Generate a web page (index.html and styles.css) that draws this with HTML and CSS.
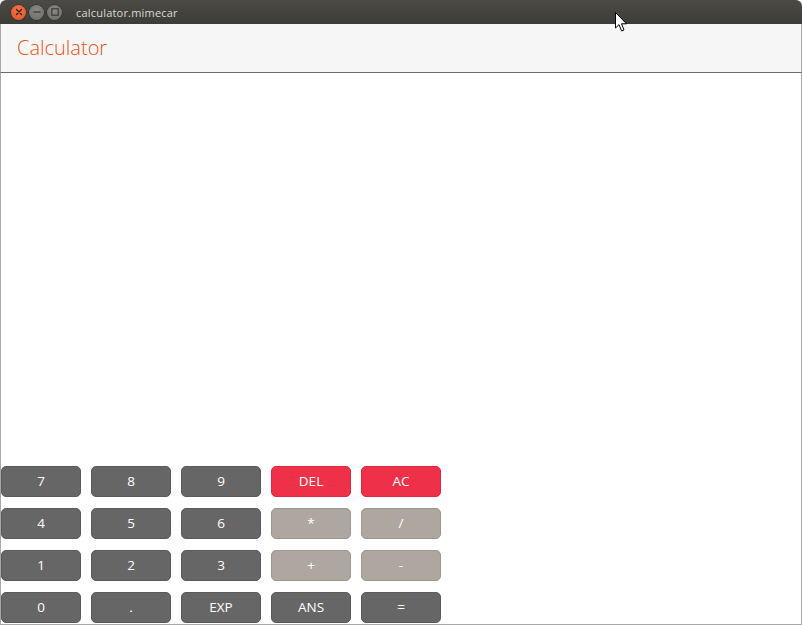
FILE: index.html
```html
<!DOCTYPE html>
<html>
<head>
<meta charset="utf-8">
<title>calculator.mimecar</title>
<link rel="stylesheet" href="styles.css">
</head>
<body>
<div class="window">
  <div class="titlebar">
    <div class="controls">
      <span class="wbtn close"><svg width="8" height="8" viewBox="0 0 8 8"><path d="M1.5 1.5 L6.5 6.5 M6.5 1.5 L1.5 6.5" stroke="#3a1a10" stroke-width="1.4" stroke-linecap="round"/></svg></span>
      <span class="wbtn"><svg width="8" height="8" viewBox="0 0 8 8"><path d="M0.5 4 H7.5" stroke="#3c3b37" stroke-width="1.3"/></svg></span>
      <span class="wbtn"><svg width="8" height="8" viewBox="0 0 8 8"><rect x="0.8" y="0.8" width="6.4" height="6.4" fill="none" stroke="#3c3b37" stroke-width="1.2"/></svg></span>
    </div>
    <span class="wtitle">calculator.mimecar</span>
  </div>
  <div class="header"><span class="apptitle">Calculator</span></div>
  <div class="content">
    <div class="keypad">
      <button class="key">7</button><button class="key">8</button><button class="key">9</button><button class="key red">DEL</button><button class="key red">AC</button>
      <button class="key">4</button><button class="key">5</button><button class="key">6</button><button class="key light">*</button><button class="key light">/</button>
      <button class="key">1</button><button class="key">2</button><button class="key">3</button><button class="key light">+</button><button class="key light">-</button>
      <button class="key">0</button><button class="key">.</button><button class="key">EXP</button><button class="key">ANS</button><button class="key">=</button>
    </div>
  </div>
  <svg class="cursor" width="13" height="21" viewBox="0 0 13 21"><path d="M0.5 0.5 L0.5 16 L4 12.6 L6.6 19 L9 18 L6.5 11.8 L11.5 11.8 Z" fill="#fff" stroke="#000" stroke-width="1" stroke-linejoin="round"/></svg>
</div>
</body>
</html>
```
FILE: styles.css
```css
html, body { margin: 0; padding: 0; }
body { width: 802px; height: 625px; overflow: hidden; background: #fff; font-family: "Open Sans", "Noto Sans", sans-serif; }
.window { position: relative; width: 802px; height: 625px; display: flex; flex-direction: column; box-sizing: border-box; }
.titlebar { height: 24px; flex: none; display: flex; align-items: center; background: linear-gradient(#4b4a45, #3d3c37); border-radius: 6px 6px 0 0; }
.controls { display: flex; gap: 3px; margin-left: 11px; }
.wbtn { width: 15px; height: 15px; border-radius: 50%; background: radial-gradient(circle at 50% 35%, #8a8985, #6a6965); display: flex; align-items: center; justify-content: center; box-shadow: 0 0 0 0.5px #2e2d2a; }
.wbtn.close { background: radial-gradient(circle at 50% 35%, #f4774b, #e0501f); }
.wtitle { margin-left: 14px; color: #dcd9d0; font-size: 11px; font-family: "Open Sans", sans-serif; letter-spacing: 0.2px; }
.header { height: 48px; flex: none; background: #f6f6f6; border-left: 1px solid #a8a8a8; border-right: 1px solid #a8a8a8; border-bottom: 1px solid #6c6c6c; display: flex; align-items: center; padding-left: 16px; }
.apptitle { color: #e95420; font-size: 20px; font-weight: 300; font-family: "Open Sans", sans-serif; margin-top: -1px; }
.content { flex: 1; display: flex; flex-direction: column; justify-content: flex-end; border-left: 1px solid #a8a8a8; border-right: 1px solid #a8a8a8; border-bottom: 1px solid #a8a8a8; }
.keypad { display: grid; grid-template-columns: repeat(5, 80px); grid-auto-rows: 31px; column-gap: 10px; row-gap: 11px; padding-bottom: 1px; }
.key { margin: 0; padding: 0 0 2px 0; border: 1px solid #5a5a5a; border-radius: 5px; background: #666666; color: #ffffff; font-family: "Open Sans", sans-serif; font-weight: 400; font-size: 13.5px; }
.key.red { background: #ee3148; border-color: #d92a3f; }
.key.light { background: #aea79f; border-color: #9d968e; }
.cursor { position: absolute; left: 615px; top: 12px; }
```
